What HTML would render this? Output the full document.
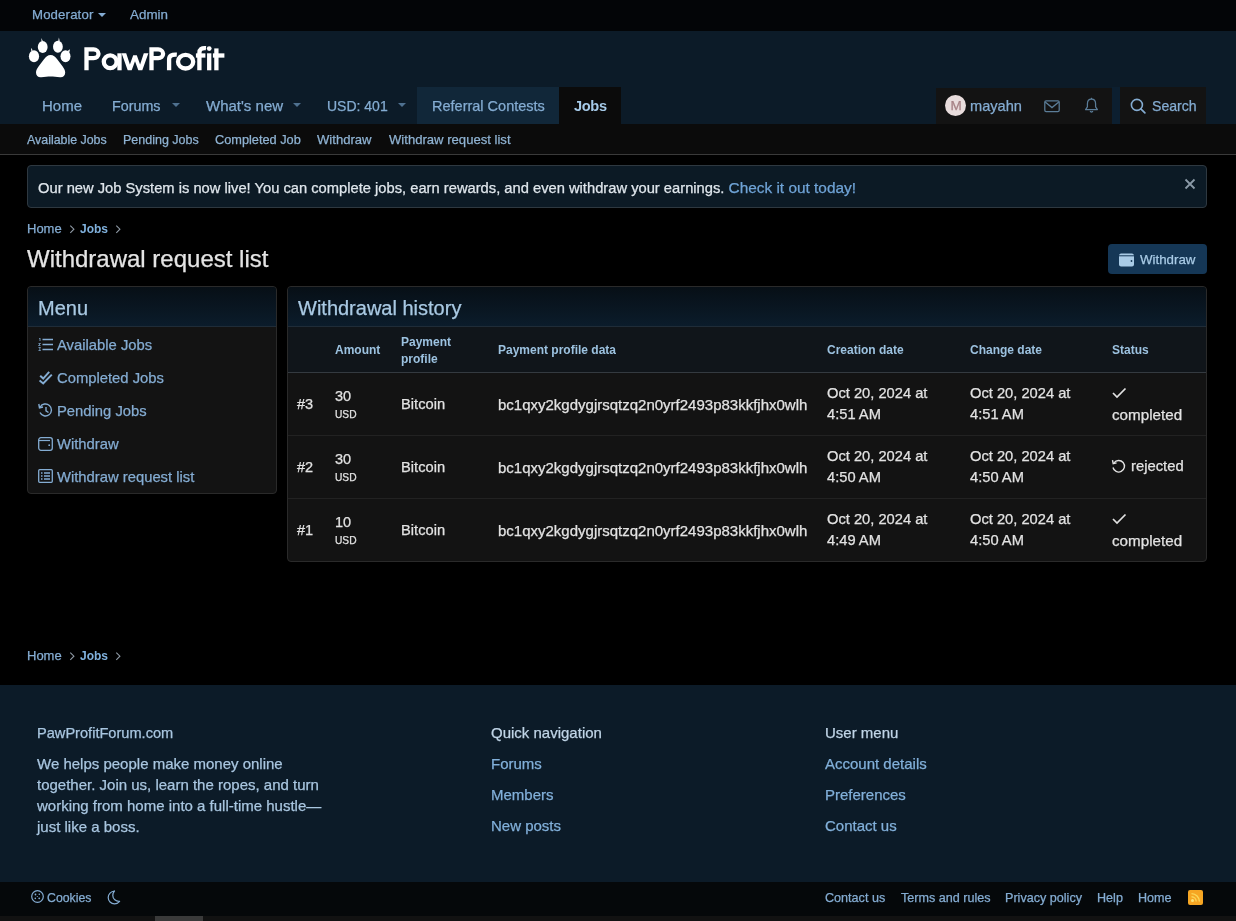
<!DOCTYPE html>
<html><head><meta charset="utf-8"><title>Withdrawal request list</title>
<style>
html,body{margin:0;padding:0;background:#000;width:1236px;height:921px;overflow:hidden}
body{position:relative;font-family:"Liberation Sans",sans-serif}
.r{position:absolute;display:block}
.t{position:absolute;white-space:nowrap;line-height:1;will-change:transform;-webkit-text-stroke:0.25px currentColor}
</style></head><body>
<div class="r" style="left:0px;top:0px;width:1236px;height:31px;background:#030507"></div>
<div class="r" style="left:0px;top:31px;width:1236px;height:93px;background:#0c1b28"></div>
<div class="r" style="left:0px;top:124px;width:1236px;height:30px;background:#0b0b0b"></div>
<div class="r" style="left:0px;top:154px;width:1236px;height:1px;background:#3a3a3a"></div>
<div class="t " style="left:32px;top:8.03px;font-size:13.2px;color:#84acd2;font-weight:400;letter-spacing:0.15px">Moderator</div>
<div class="r" style="left:98px;top:13px;width:0;height:0;border-left:4px solid transparent;border-right:4px solid transparent;border-top:4px solid #84acd2"></div>
<div class="t " style="left:130px;top:7.86px;font-size:13.4px;color:#84acd2;font-weight:400;">Admin</div>
<svg class="r" style="left:24px;top:34px" width="60" height="50" viewBox="0 0 60 50">
<g fill="#fff">
<ellipse cx="10" cy="22.3" rx="5.1" ry="6"/>
<ellipse cx="18.7" cy="13" rx="4.9" ry="6"/>
<ellipse cx="33.9" cy="12.8" rx="4.9" ry="6"/>
<ellipse cx="41.5" cy="22.3" rx="5" ry="6"/>
<path d="M7.2 17 L7.1 13.8 L8.8 16.6Z M17.5 7.5 L17.4 4 L19 7.4Z M34.2 7.2 L34.9 3.6 L35.8 7.4Z M43.2 17.3 L46 15.3 L45.3 18.6Z"/>
<path d="M26.6 20.9 C29.5 20.9 31.2 22.6 33.2 25.2 L38.5 32.3 C40.2 34.6 41.2 36.4 41.2 38.6 C41.2 41.8 39 43.6 36 43.3 C32.5 43 29.5 42.5 26.6 42.5 C23.7 42.5 20.7 43 17.2 43.3 C14.2 43.6 12 41.8 12 38.6 C12 36.4 13 34.6 14.7 32.3 L20 25.2 C22 22.6 23.7 20.9 26.6 20.9Z"/>
</g></svg>
<svg class="r" style="left:80px;top:40px" width="150" height="36" viewBox="0 0 150 36"><g fill="none" stroke="#fff" stroke-width="4.3" stroke-linejoin="miter">
<path d="M6.5 30.3 V9.45 H13.6 A4.9 4.375 0 0 1 13.6 18.2 H6.5"/>
<circle cx="30.2" cy="21.8" r="6.4"/><path d="M39.5 13.3 V30.3"/>
<path d="M41.6 13.3 L46.2 13.3 L49.9 24.6 L53.2 15.2 L56.8 15.2 L60.1 24.6 L63.8 13.3 L68.4 13.3 L62.3 30.3 L58.3 30.3 L55 21.2 L51.7 30.3 L47.7 30.3Z" fill="#fff" stroke="none"/>
<path d="M71.5 30.3 V9.45 H78.2 A4.9 4.375 0 0 1 78.2 18.2 H71.5"/>
<path d="M89.1 30.3 V19.5 C89.1 16 91.5 14.2 96.8 14.6"/>
<ellipse cx="105.6" cy="21.7" rx="7.6" ry="6.8"/>
<path d="M119.4 30.3 V13 C119.4 9.3 121.5 7.8 126 8.2"/><path d="M115.9 15.5 H125.4"/>
<path d="M129.2 13.3 V30.3"/>
<path d="M136.4 8.4 V30.3"/><path d="M132.9 15.5 H144.4"/>
</g><circle cx="129.2" cy="8.6" r="2.4" fill="#fff"/></svg>
<div class="t " style="left:42px;top:98.30px;font-size:15px;color:#84acd2;font-weight:400;">Home</div>
<div class="t " style="left:112px;top:98.90px;font-size:14.3px;color:#84acd2;font-weight:400;">Forums</div>
<div class="r" style="left:172px;top:103px;width:0;height:0;border-left:4.5px solid transparent;border-right:4.5px solid transparent;border-top:4.5px solid #4f7190"></div>
<div class="t " style="left:206px;top:98.30px;font-size:15px;color:#84acd2;font-weight:400;">What's new</div>
<div class="r" style="left:293px;top:103px;width:0;height:0;border-left:4.5px solid transparent;border-right:4.5px solid transparent;border-top:4.5px solid #4f7190"></div>
<div class="t " style="left:327px;top:99.15px;font-size:14px;color:#84acd2;font-weight:400;">USD: 401</div>
<div class="r" style="left:398px;top:103px;width:0;height:0;border-left:4.5px solid transparent;border-right:4.5px solid transparent;border-top:4.5px solid #4f7190"></div>
<div class="r" style="left:417px;top:87px;width:142px;height:37px;background:#112739"></div>
<div class="t " style="left:432px;top:98.73px;font-size:14.5px;color:#84acd2;font-weight:400;">Referral Contests</div>
<div class="r" style="left:559px;top:87px;width:62px;height:37px;background:#0b0b0b"></div>
<div class="t " style="left:574px;top:98.94px;font-size:14.6px;color:#a6cae8;font-weight:700;-webkit-text-stroke:0;letter-spacing:-0.35px">Jobs</div>
<div class="r" style="left:936px;top:88px;width:176px;height:36px;background:#131313"></div>
<div class="r" style="left:1112px;top:87px;width:8px;height:37px;background:#0c1f30"></div>
<div class="r" style="left:1120px;top:87px;width:86px;height:37px;background:#131313"></div>
<div class="r" style="left:945px;top:95px;width:21px;height:21px;border-radius:50%;background:#e8dcdc"></div>
<div class="t " style="left:949.5px;top:98.57px;font-size:13.5px;color:#a58084;font-weight:400;width:12px;text-align:center">M</div>
<div class="t " style="left:970px;top:98.64px;font-size:14.6px;color:#84acd2;font-weight:400;">mayahn</div>
<svg class="r" style="left:1044px;top:99.5px" width="16" height="13" viewBox="0 0 16 13"><rect x="0.8" y="0.8" width="14.4" height="10.8" rx="1.3" fill="none" stroke="#5b7d98" stroke-width="1.25"/><path d="M1.2 2 L8 7.6 L14.8 2" fill="none" stroke="#5b7d98" stroke-width="1.25"/></svg>
<svg class="r" style="left:1084px;top:97px" width="15" height="17" viewBox="0 0 15 17"><path d="M7.5 2.2 C5 2.2 3.4 4.3 3.4 7 L3.4 9.8 L1.6 12.6 L13.4 12.6 L11.6 9.8 L11.6 7 C11.6 4.3 10 2.2 7.5 2.2Z" fill="none" stroke="#5b7d98" stroke-width="1.25" stroke-linejoin="round"/><path d="M7.5 0.8 L7.5 2.2" stroke="#5b7d98" stroke-width="1.3"/><path d="M6.2 14 C6.6 15.3 8.4 15.3 8.8 14" fill="none" stroke="#5b7d98" stroke-width="1.3"/></svg>
<svg class="r" style="left:1130px;top:97.5px" width="17" height="17" viewBox="0 0 17 17"><circle cx="6.9" cy="6.9" r="5.5" fill="none" stroke="#84acd2" stroke-width="1.6"/><path d="M10.8 10.8 L14.9 14.9" stroke="#84acd2" stroke-width="1.7" stroke-linecap="round"/></svg>
<div class="t " style="left:1152px;top:99.06px;font-size:14.1px;color:#84acd2;font-weight:400;">Search</div>
<div class="t " style="left:27px;top:133.80px;font-size:12.4px;color:#8fb3d3;font-weight:400;">Available Jobs</div>
<div class="t " style="left:123px;top:133.72px;font-size:12.5px;color:#8fb3d3;font-weight:400;">Pending Jobs</div>
<div class="t " style="left:215px;top:133.51px;font-size:12.75px;color:#8fb3d3;font-weight:400;">Completed Job</div>
<div class="t " style="left:317px;top:133.21px;font-size:13.1px;color:#8fb3d3;font-weight:400;">Withdraw</div>
<div class="t " style="left:389px;top:133.21px;font-size:13.1px;color:#8fb3d3;font-weight:400;">Withdraw request list</div>
<div class="r" style="left:27px;top:165px;width:1180px;height:43px;background:#0c1a25;border:1px solid #2e3840;border-radius:4px;box-sizing:border-box"></div>
<div class="t " style="left:37.5px;top:179.54px;font-size:14.72px;color:#dfe6ec;font-weight:400;">Our new Job System is now live! You can complete jobs, earn rewards, and even withdraw your earnings. <span style="color:#6fa3d6;font-size:15.4px">Check it out today!</span></div>
<svg class="r" style="left:1184px;top:178px" width="12" height="12" viewBox="0 0 12 12"><path d="M1.5 1.5 L10.5 10.5 M10.5 1.5 L1.5 10.5" stroke="#8b9aa7" stroke-width="1.8"/></svg>
<div class="t " style="left:26.8px;top:222.00px;font-size:13px;color:#84acd2;font-weight:400;">Home</div>
<svg class="r" style="left:68px;top:224px" width="8" height="10" viewBox="0 0 8 10"><path d="M2.3 1.6 L5.9 5.2 L2.3 8.8" fill="none" stroke="#8f9aa5" stroke-width="1.1"/></svg>
<div class="t " style="left:80px;top:222.84px;font-size:12px;color:#7fb0dc;font-weight:700;-webkit-text-stroke:0;">Jobs</div>
<svg class="r" style="left:114px;top:224px" width="8" height="10" viewBox="0 0 8 10"><path d="M2.3 1.6 L5.9 5.2 L2.3 8.8" fill="none" stroke="#8f9aa5" stroke-width="1.1"/></svg>
<div class="t " style="left:26.5px;top:247.28px;font-size:24px;color:#e4e4e4;font-weight:400;">Withdrawal request list</div>
<div class="r" style="left:1108px;top:244px;width:99px;height:30px;background:#153756;border-radius:4px"></div>
<svg class="r" style="left:1119px;top:253px" width="16" height="14" viewBox="0 0 16 14"><path d="M2 0.5 L13 0.5 C14 0.5 15 1.5 15 2.5 L15 11.5 C15 12.5 14 13.5 13 13.5 L2 13.5 C1 13.5 0 12.5 0 11.5 L0 2.5 C0 1.5 1 0.5 2 0.5Z" fill="#a9cbe6"/><rect x="0" y="2.3" width="15" height="1" fill="#153756"/><circle cx="12.5" cy="8" r="0.9" fill="#153756"/></svg>
<div class="t " style="left:1140px;top:253.34px;font-size:13.3px;color:#a9cbe6;font-weight:400;">Withdraw</div>
<div class="r" style="left:27px;top:286px;width:250px;height:208px;background:#131313;border:1px solid #2a2a2a;border-radius:4px;box-sizing:border-box"></div>
<div class="r" style="left:28px;top:287px;width:248px;height:40px;background:linear-gradient(to bottom,#070f16,#0b1c2b);border-radius:3px 3px 0 0;border-bottom:1px solid #1f2c38;box-sizing:border-box"></div>
<div class="t " style="left:38px;top:298.07px;font-size:20px;color:#a9c9e3;font-weight:400;">Menu</div>
<div class="t " style="left:56.5px;top:337.87px;font-size:14.8px;color:#84acd2;font-weight:400;">Available Jobs</div>
<div class="t " style="left:56.5px;top:370.77px;font-size:14.8px;color:#84acd2;font-weight:400;">Completed Jobs</div>
<div class="t " style="left:56.5px;top:403.97px;font-size:14.8px;color:#84acd2;font-weight:400;">Pending Jobs</div>
<div class="t " style="left:56.5px;top:437.07px;font-size:14.8px;color:#84acd2;font-weight:400;">Withdraw</div>
<div class="t " style="left:56.5px;top:469.87px;font-size:14.8px;color:#84acd2;font-weight:400;">Withdraw request list</div>
<svg class="r" style="left:38px;top:338px" width="16" height="13" viewBox="0 0 16 13"><path d="M4.5 1.5 H15 M4.5 6.5 H15 M4.5 11.5 H15" stroke="#84acd2" stroke-width="1.3"/><path d="M1 0.5 L2 0 L2 3 M0.5 5.5 L2.5 5.5 L0.5 7.5 L2.5 7.5 M0.5 9.5 L2.5 9.5 L1.5 11 L2.5 12.5 L0.5 12.5" fill="none" stroke="#84acd2" stroke-width="0.8"/></svg>
<svg class="r" style="left:39px;top:371px" width="15" height="14" viewBox="0 0 15 14"><path d="M1.2 4.8 L4.2 7.6 L10.2 0.9 M0.6 9.4 L4.2 12.4 L12.8 3.6" fill="none" stroke="#84acd2" stroke-width="2"/></svg>
<svg class="r" style="left:38px;top:403px" width="15" height="15" viewBox="0 0 15 15"><path d="M2.2 4 A6 6 0 1 1 2 9.5" fill="none" stroke="#84acd2" stroke-width="1.4"/><path d="M0.8 1 L1.5 4.8 L5 4" fill="none" stroke="#84acd2" stroke-width="1.4"/><path d="M8 4 L8 7.8 L10.5 9.5" fill="none" stroke="#84acd2" stroke-width="1.4"/></svg>
<svg class="r" style="left:38px;top:437px" width="15" height="14" viewBox="0 0 15 14"><rect x="0.7" y="0.7" width="13.6" height="12.6" rx="2.2" fill="none" stroke="#84acd2" stroke-width="1.3"/><path d="M0.7 3.5 L12 3.5" stroke="#84acd2" stroke-width="1.2"/><circle cx="11.2" cy="8.2" r="0.9" fill="#84acd2"/></svg>
<svg class="r" style="left:38px;top:469px" width="15" height="14" viewBox="0 0 15 14"><rect x="0.7" y="0.7" width="13.6" height="12.6" rx="1" fill="none" stroke="#84acd2" stroke-width="1.3"/><path d="M3 4 H4.5 M3 7 H4.5 M3 10 H4.5 M6 4 H12 M6 7 H12 M6 10 H12" stroke="#84acd2" stroke-width="1.3"/></svg>
<div class="r" style="left:287px;top:286px;width:920px;height:276px;background:#131313;border:1px solid #2a2a2a;border-radius:4px;box-sizing:border-box"></div>
<div class="r" style="left:288px;top:287px;width:918px;height:40px;background:linear-gradient(to bottom,#070f16,#0b1c2b);border-radius:3px 3px 0 0;border-bottom:1px solid #1f2c38;box-sizing:border-box"></div>
<div class="t " style="left:298px;top:298.27px;font-size:20px;color:#a9c9e3;font-weight:400;">Withdrawal history</div>
<div class="r" style="left:288px;top:327px;width:918px;height:45px;background:#10151a"></div>
<div class="r" style="left:288px;top:372px;width:918px;height:1px;background:#343a40"></div>
<div class="t " style="left:334.5px;top:343.84px;font-size:12px;color:#9cc2e0;font-weight:700;-webkit-text-stroke:0;">Amount</div>
<div class="t " style="left:400.8px;top:335.84px;font-size:12px;color:#9cc2e0;font-weight:700;-webkit-text-stroke:0;">Payment</div>
<div class="t " style="left:400.8px;top:352.84px;font-size:12px;color:#9cc2e0;font-weight:700;-webkit-text-stroke:0;">profile</div>
<div class="t " style="left:497.6px;top:343.84px;font-size:12px;color:#9cc2e0;font-weight:700;-webkit-text-stroke:0;">Payment profile data</div>
<div class="t " style="left:826.7px;top:344.14px;font-size:12px;color:#9cc2e0;font-weight:700;-webkit-text-stroke:0;">Creation date</div>
<div class="t " style="left:970.2px;top:344.14px;font-size:12px;color:#9cc2e0;font-weight:700;-webkit-text-stroke:0;">Change date</div>
<div class="t " style="left:1111.5px;top:344.14px;font-size:12px;color:#9cc2e0;font-weight:700;-webkit-text-stroke:0;">Status</div>
<div class="t " style="left:297.3px;top:396.53px;font-size:14.5px;color:#e2e2e2;font-weight:400;">#3</div>
<div class="t " style="left:335px;top:388.93px;font-size:14.5px;color:#e2e2e2;font-weight:400;">30</div>
<div class="t " style="left:335px;top:410.37px;font-size:10.2px;color:#e2e2e2;font-weight:400;">USD</div>
<div class="t " style="left:400.8px;top:397.06px;font-size:14.7px;color:#e2e2e2;font-weight:400;">Bitcoin</div>
<div class="t " style="left:497.6px;top:396.80px;font-size:15px;color:#e2e2e2;font-weight:400;">bc1qxy2kgdygjrsqtzq2n0yrf2493p83kkfjhx0wlh</div>
<div class="t " style="left:826.7px;top:386.36px;font-size:14.7px;color:#e2e2e2;font-weight:400;">Oct 20, 2024 at</div>
<div class="t " style="left:826.7px;top:407.06px;font-size:14.7px;color:#e2e2e2;font-weight:400;">4:51 AM</div>
<div class="t " style="left:970.2px;top:386.36px;font-size:14.7px;color:#e2e2e2;font-weight:400;">Oct 20, 2024 at</div>
<div class="t " style="left:970.2px;top:407.06px;font-size:14.7px;color:#e2e2e2;font-weight:400;">4:51 AM</div>
<svg class="r" style="left:1112px;top:387px" width="15" height="12" viewBox="0 0 15 12"><path d="M1 6 L5 10 L13.5 1.5" fill="none" stroke="#e2e2e2" stroke-width="1.7"/></svg>
<div class="t " style="left:1112px;top:407.13px;font-size:15.2px;color:#e2e2e2;font-weight:400;">completed</div>
<div class="r" style="left:288px;top:435px;width:918px;height:1px;background:#222222"></div>
<div class="t " style="left:297.3px;top:459.53px;font-size:14.5px;color:#e2e2e2;font-weight:400;">#2</div>
<div class="t " style="left:335px;top:451.93px;font-size:14.5px;color:#e2e2e2;font-weight:400;">30</div>
<div class="t " style="left:335px;top:473.37px;font-size:10.2px;color:#e2e2e2;font-weight:400;">USD</div>
<div class="t " style="left:400.8px;top:460.06px;font-size:14.7px;color:#e2e2e2;font-weight:400;">Bitcoin</div>
<div class="t " style="left:497.6px;top:459.80px;font-size:15px;color:#e2e2e2;font-weight:400;">bc1qxy2kgdygjrsqtzq2n0yrf2493p83kkfjhx0wlh</div>
<div class="t " style="left:826.7px;top:449.36px;font-size:14.7px;color:#e2e2e2;font-weight:400;">Oct 20, 2024 at</div>
<div class="t " style="left:826.7px;top:470.06px;font-size:14.7px;color:#e2e2e2;font-weight:400;">4:50 AM</div>
<div class="t " style="left:970.2px;top:449.36px;font-size:14.7px;color:#e2e2e2;font-weight:400;">Oct 20, 2024 at</div>
<div class="t " style="left:970.2px;top:470.06px;font-size:14.7px;color:#e2e2e2;font-weight:400;">4:50 AM</div>
<svg class="r" style="left:1111px;top:459px" width="15" height="15" viewBox="0 0 15 15"><path d="M3 3.8 A5.8 5.8 0 1 1 2 8.5" fill="none" stroke="#e2e2e2" stroke-width="1.4"/><path d="M1.5 1.2 L2.2 4.6 L5.6 3.9" fill="none" stroke="#e2e2e2" stroke-width="1.4"/></svg>
<div class="t " style="left:1131px;top:458.97px;font-size:14.8px;color:#e2e2e2;font-weight:400;">rejected</div>
<div class="r" style="left:288px;top:498px;width:918px;height:1px;background:#222222"></div>
<div class="t " style="left:297.3px;top:522.53px;font-size:14.5px;color:#e2e2e2;font-weight:400;">#1</div>
<div class="t " style="left:335px;top:514.93px;font-size:14.5px;color:#e2e2e2;font-weight:400;">10</div>
<div class="t " style="left:335px;top:536.37px;font-size:10.2px;color:#e2e2e2;font-weight:400;">USD</div>
<div class="t " style="left:400.8px;top:523.06px;font-size:14.7px;color:#e2e2e2;font-weight:400;">Bitcoin</div>
<div class="t " style="left:497.6px;top:522.80px;font-size:15px;color:#e2e2e2;font-weight:400;">bc1qxy2kgdygjrsqtzq2n0yrf2493p83kkfjhx0wlh</div>
<div class="t " style="left:826.7px;top:512.36px;font-size:14.7px;color:#e2e2e2;font-weight:400;">Oct 20, 2024 at</div>
<div class="t " style="left:826.7px;top:533.06px;font-size:14.7px;color:#e2e2e2;font-weight:400;">4:49 AM</div>
<div class="t " style="left:970.2px;top:512.36px;font-size:14.7px;color:#e2e2e2;font-weight:400;">Oct 20, 2024 at</div>
<div class="t " style="left:970.2px;top:533.06px;font-size:14.7px;color:#e2e2e2;font-weight:400;">4:50 AM</div>
<svg class="r" style="left:1112px;top:513px" width="15" height="12" viewBox="0 0 15 12"><path d="M1 6 L5 10 L13.5 1.5" fill="none" stroke="#e2e2e2" stroke-width="1.7"/></svg>
<div class="t " style="left:1112px;top:533.13px;font-size:15.2px;color:#e2e2e2;font-weight:400;">completed</div>
<div class="t " style="left:26.8px;top:649.00px;font-size:13px;color:#84acd2;font-weight:400;">Home</div>
<svg class="r" style="left:68px;top:651px" width="8" height="10" viewBox="0 0 8 10"><path d="M2.3 1.6 L5.9 5.2 L2.3 8.8" fill="none" stroke="#8f9aa5" stroke-width="1.1"/></svg>
<div class="t " style="left:80px;top:649.84px;font-size:12px;color:#7fb0dc;font-weight:700;-webkit-text-stroke:0;">Jobs</div>
<svg class="r" style="left:114px;top:651px" width="8" height="10" viewBox="0 0 8 10"><path d="M2.3 1.6 L5.9 5.2 L2.3 8.8" fill="none" stroke="#8f9aa5" stroke-width="1.1"/></svg>
<div class="r" style="left:0px;top:685px;width:1236px;height:197px;background:#0c1b28"></div>
<div class="t " style="left:36.5px;top:725.64px;font-size:14.6px;color:#a9c6e0;font-weight:400;">PawProfitForum.com</div>
<div class="t " style="left:36.5px;top:755.90px;font-size:15px;color:#a9c6e0;font-weight:400;">We helps people make money online</div>
<div class="t " style="left:36.5px;top:776.90px;font-size:15px;color:#a9c6e0;font-weight:400;">together. Join us, learn the ropes, and turn</div>
<div class="t " style="left:36.5px;top:797.90px;font-size:15px;color:#a9c6e0;font-weight:400;">working from home into a full-time hustle&mdash;</div>
<div class="t " style="left:36.5px;top:818.90px;font-size:15px;color:#a9c6e0;font-weight:400;">just like a boss.</div>
<div class="t " style="left:490.5px;top:725.30px;font-size:15px;color:#c0d5e7;font-weight:400;">Quick navigation</div>
<div class="t " style="left:825px;top:725.30px;font-size:15px;color:#c0d5e7;font-weight:400;">User menu</div>
<div class="t " style="left:490.5px;top:756.30px;font-size:15px;color:#82b0da;font-weight:400;">Forums</div>
<div class="t " style="left:490.5px;top:787.30px;font-size:15px;color:#82b0da;font-weight:400;">Members</div>
<div class="t " style="left:490.5px;top:818.30px;font-size:15px;color:#82b0da;font-weight:400;">New posts</div>
<div class="t " style="left:825px;top:756.30px;font-size:15px;color:#82b0da;font-weight:400;">Account details</div>
<div class="t " style="left:825px;top:787.30px;font-size:15px;color:#82b0da;font-weight:400;">Preferences</div>
<div class="t " style="left:825px;top:818.30px;font-size:15px;color:#82b0da;font-weight:400;">Contact us</div>
<div class="r" style="left:0px;top:882px;width:1236px;height:34px;background:#05080a"></div>
<div class="r" style="left:0px;top:916px;width:1236px;height:5px;background:#121212"></div>
<div class="r" style="left:155px;top:916px;width:48px;height:5px;background:#3a3a3a"></div>
<svg class="r" style="left:31px;top:890px" width="13" height="13" viewBox="0 0 13 13"><circle cx="6.5" cy="6.5" r="5.8" fill="none" stroke="#84acd2" stroke-width="1.2"/><circle cx="4.5" cy="4.5" r="0.9" fill="#84acd2"/><circle cx="8.3" cy="4.2" r="0.8" fill="#84acd2"/><circle cx="4.3" cy="8.4" r="0.8" fill="#84acd2"/><circle cx="8.2" cy="8.3" r="0.9" fill="#84acd2"/><circle cx="6.3" cy="6.5" r="0.6" fill="#84acd2"/></svg>
<div class="t " style="left:47px;top:892.09px;font-size:12.3px;color:#84acd2;font-weight:400;">Cookies</div>
<svg class="r" style="left:107px;top:890px" width="14" height="15" viewBox="0 0 14 15"><path d="M7.5 1 C4 1.3 1.2 4 1.2 7.5 C1.2 11 4 13.8 7.5 13.8 C9.6 13.8 11.4 12.8 12.6 11.3 C8.8 11.6 5.8 9 5.8 5.5 C5.8 3.6 6.5 2.1 7.5 1Z" fill="none" stroke="#84acd2" stroke-width="1.2" stroke-linejoin="round"/></svg>
<div class="t " style="left:825px;top:891.83px;font-size:12.6px;color:#84acd2;font-weight:400;">Contact us</div>
<div class="t " style="left:901px;top:891.83px;font-size:12.6px;color:#84acd2;font-weight:400;">Terms and rules</div>
<div class="t " style="left:1005.3px;top:891.83px;font-size:12.6px;color:#84acd2;font-weight:400;">Privacy policy</div>
<div class="t " style="left:1097.4px;top:891.83px;font-size:12.6px;color:#84acd2;font-weight:400;">Help</div>
<div class="t " style="left:1138.4px;top:891.83px;font-size:12.6px;color:#84acd2;font-weight:400;">Home</div>
<div class="r" style="left:1188px;top:890px;width:15px;height:15px;background:#f6a623;border-radius:2px"></div>
<svg class="r" style="left:1188px;top:890px" width="15" height="15" viewBox="0 0 15 15"><circle cx="4.5" cy="10.6" r="1.5" fill="#fde57a"/><path d="M3.5 6.8 A4.7 4.7 0 0 1 8.2 11.5 M3.5 3.6 A7.9 7.9 0 0 1 11.4 11.5" fill="none" stroke="#fbd85a" stroke-width="1.4"/></svg>
</body></html>
